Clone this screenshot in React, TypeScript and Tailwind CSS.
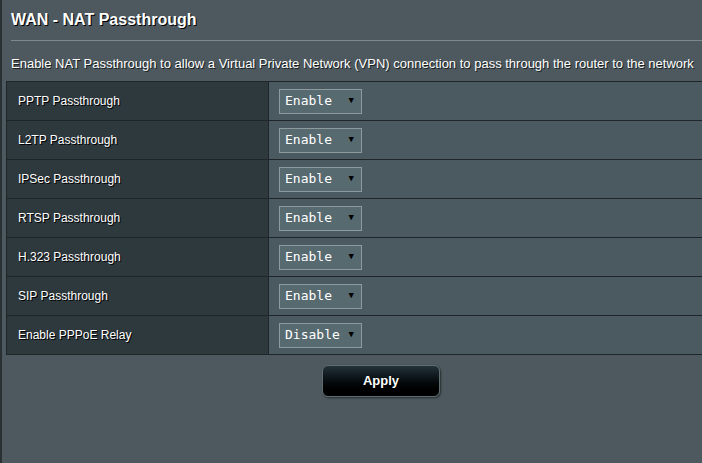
const rows = [
  { label: 'PPTP Passthrough', value: 'Enable' },
  { label: 'L2TP Passthrough', value: 'Enable' },
  { label: 'IPSec Passthrough', value: 'Enable' },
  { label: 'RTSP Passthrough', value: 'Enable' },
  { label: 'H.323 Passthrough', value: 'Enable' },
  { label: 'SIP Passthrough', value: 'Enable' },
  { label: 'Enable PPPoE Relay', value: 'Disable' },
]

function SelectBox({ value }: { value: string }) {
  return (
    <div className="flex items-center justify-between w-[83px] h-[25px] pl-[5px] pr-[7px] bg-[#576a70] border border-[#8d9a9e] text-[13px] text-white font-['DejaVu_Sans_Mono',monospace]">
      <span>{value}</span>
      <span className="text-[9px] text-black">▼</span>
    </div>
  )
}

export default function App() {
  return (
    <div className="w-[702px] h-[463px] overflow-hidden bg-[#4d595e] border-l-2 border-[#2a3134] font-['Liberation_Sans',Arial,sans-serif] text-white">
      <div className="pl-[9px] pt-[8px] pb-[8px] text-[16px] font-bold [text-shadow:1px_1px_0_#000]">
        WAN - NAT Passthrough
      </div>
      <div className="ml-[9px] h-px bg-[#7d898d]" />
      <div className="pl-[9px] pt-[13px] pb-[8px] text-[13px] leading-[19px] whitespace-nowrap [text-shadow:1px_1px_0_#1a1f21]">
        Enable NAT Passthrough to allow a Virtual Private Network (VPN) connection to pass through the router to the network
      </div>
      <div className="ml-[4px] border-t border-l border-[#1f2629]">
        {rows.map((r) => (
          <div key={r.label} className="flex h-[39px] border-b border-[#1f2629]">
            <div className="w-[262px] flex items-center pl-[11px] bg-[#2e393e] border-r border-[#1f2629] text-[12px] [text-shadow:1px_1px_0_#000]">
              {r.label}
            </div>
            <div className="flex-1 flex items-center pl-[10px] bg-[#4a5a60]">
              <SelectBox value={r.value} />
            </div>
          </div>
        ))}
      </div>
      <div className="flex pt-[10px] pl-[320px]">
        <button className="w-[118px] h-[32px] rounded-[6px] border border-[#5f6d71] bg-gradient-to-b from-[#233339] to-[#000000] text-[13px] font-bold text-white [text-shadow:1px_1px_0_#000] shadow-[1px_1px_2px_rgba(0,0,0,0.5)]">
          Apply
        </button>
      </div>
    </div>
  )
}
